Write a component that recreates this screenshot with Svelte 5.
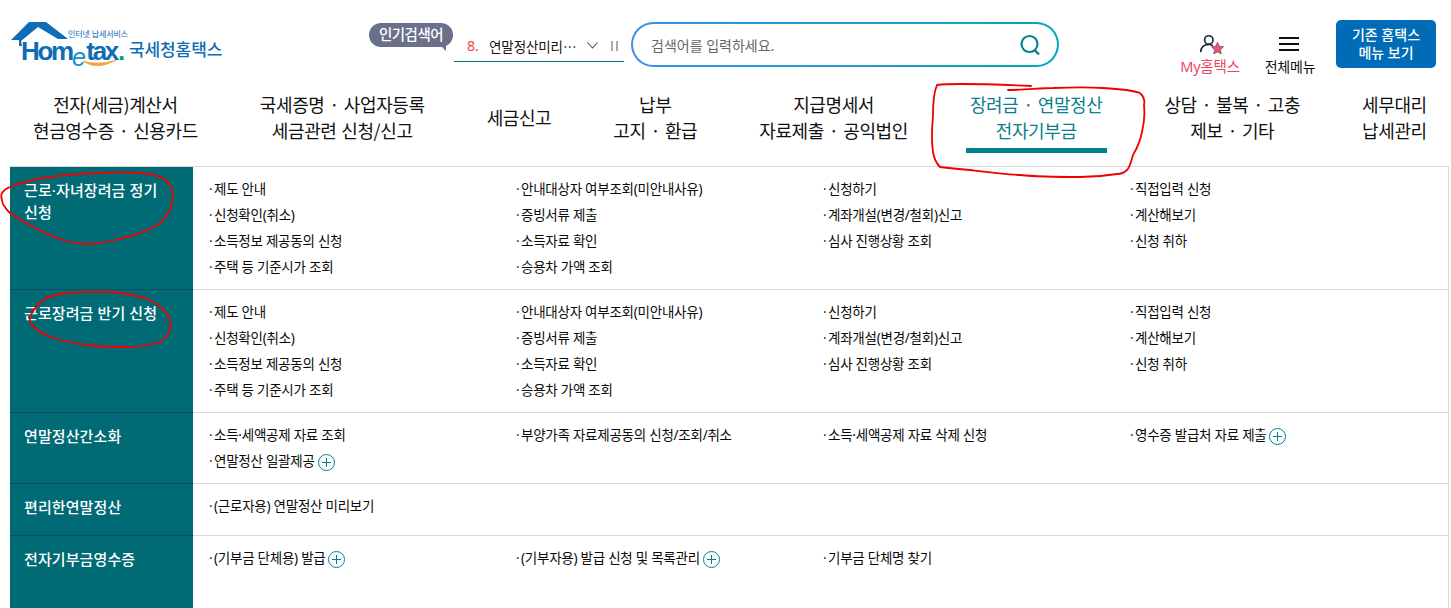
<script>
  const nav = [
    ['전자(세금)계산서', '현금영수증 · 신용카드'],
    ['국세증명 · 사업자등록', '세금관련 신청/신고'],
    ['세금신고'],
    ['납부', '고지 · 환급'],
    ['지급명세서', '자료제출 · 공익법인'],
    ['장려금 · 연말정산', '전자기부금'],
    ['상담 · 불복 · 고충', '제보 · 기타'],
    ['세무대리', '납세관리']
  ];
  const base = [
    ['제도 안내'], ['안내대상자 여부조회(미안내사유)'], ['신청하기'], ['직접입력 신청'],
    ['신청확인(취소)'], ['증빙서류 제출'], ['계좌개설(변경/철회)신고'], ['계산해보기'],
    ['소득정보 제공동의 신청'], ['소득자료 확인'], ['심사 진행상황 조회'], ['신청 취하'],
    ['주택 등 기준시가 조회'], ['승용차 가액 조회']
  ];
  const rows = [
    { title: '근로·자녀장려금 정기 신청', items: base, cls: 'r1' },
    { title: '근로장려금 반기 신청', items: base, cls: 'r1' },
    { title: '연말정산간소화', cls: 'r3', items: [
      ['소득·세액공제 자료 조회'], ['부양가족 자료제공동의 신청/조회/취소'], ['소득·세액공제 자료 삭제 신청'], ['영수증 발급처 자료 제출', true],
      ['연말정산 일괄제공', true]
    ]},
    { title: '편리한연말정산', cls: 'r4', items: [['(근로자용) 연말정산 미리보기']] },
    { title: '전자기부금영수증', cls: 'r5', items: [
      ['(기부금 단체용) 발급', true], ['(기부자용) 발급 신청 및 목록관리', true], ['기부금 단체명 찾기']
    ]}
  ];
</script>

<div class="page">
  <header class="top">
    <div class="logo">
      <svg class="house" viewBox="0 0 60 22" width="60" height="22" aria-hidden="true">
        <path d="M0 18 L18 0 H35 L57 17 H47 L27 5 L10 19 L11 24 H8 V18 Z" fill="#0f6cb5" />
      </svg>
      <span class="small-tag">인터넷 납세서비스</span>
      <span class="wordmark">Hom<span class="e">e</span>tax<span class="dot">.</span></span>
      <svg class="smile" viewBox="0 0 34 9" width="34" height="9" aria-hidden="true">
        <path d="M0 1 Q14 11 33 0 Q16 6 0 1 Z" fill="#f3a33a" stroke="#f3a33a" stroke-width="0.8"/>
      </svg>
      <span class="brand">국세청홈택스</span>
    </div>

    <div class="popular">
      <span class="bubble">인기검색어</span>
      <div class="rank">
        <b>8.</b><span class="rank-text">연말정산미리…</span>
        <svg viewBox="0 0 11 7" width="11" height="7" aria-hidden="true"><path d="M0.5 0.5 L5.5 6 L10.5 0.5" fill="none" stroke="#555" stroke-width="1.1"/></svg>
        <span class="pause"></span>
      </div>
    </div>

    <div class="search">
      <span class="ph">검색어를 입력하세요.</span>
      <svg viewBox="0 0 22 22" width="22" height="22" aria-hidden="true">
        <circle cx="10.5" cy="10" r="8" fill="none" stroke="#00838f" stroke-width="2.2"/>
        <path d="M15.5 16 L20 20.5" stroke="#00838f" stroke-width="2.4" fill="none"/>
      </svg>
    </div>

    <div class="my">
      <svg viewBox="0 0 28 22" width="26" height="20" aria-hidden="true">
        <circle cx="10.5" cy="6.5" r="4.6" fill="none" stroke="#1c2340" stroke-width="1.8"/>
        <path d="M1.5 20 C2 14 6 11.5 10.5 11.5 C12 11.5 13.5 12 15 12.8" fill="none" stroke="#1c2340" stroke-width="1.8"/>
        <path d="M20 9 L22.1 13.4 L26.8 14 L23.3 17.3 L24.2 22 L20 19.7 L15.8 22 L16.7 17.3 L13.2 14 L17.9 13.4 Z" fill="#f0536f" stroke="#1c2340" stroke-width="0.5"/>
      </svg>
      <span>My홈택스</span>
    </div>
    <div class="all">
      <span class="burger"><i></i><i></i><i></i></span>
      <span>전체메뉴</span>
    </div>
    <div class="old">기존 홈택스<br />메뉴 보기</div>
  </header>

  <nav class="nav">
    {#each nav as lines, i}
      <div class="nav-item" class:on={i === 5}>
        <div class="nav-label">
          {#each lines as l}<div>{l}</div>{/each}
        </div>
      </div>
    {/each}
  </nav>

  <section class="table">
    {#each rows as row}
      <div class="row {row.cls}">
        <h3>{row.title}</h3>
        <ul>
          {#each row.items as it}
            <li>
              <span class="mid">·</span><span>{it[0]}</span>{#if it[1]}<span class="plus"></span>{/if}
            </li>
          {/each}
        </ul>
      </div>
    {/each}
  </section>

  <svg class="marks" viewBox="0 0 1451 608" width="1451" height="608" aria-hidden="true">
    <path d="M1008 90 C1025 90 1040 88 1053 88 C1075 87 1090 87 1103 88 C1120 89 1132 90 1140 93 C1144 97 1145 101 1144 105 C1145 115 1144 124 1142 132 C1140 142 1136 150 1133 155 C1131 162 1130 167 1127 170 C1124 173 1121 174 1117 174 C1105 176 1092 177 1080 177 C1060 177 1040 177 1020 175 C1003 174 987 172 970 170 C958 169 948 168 940 167 C936 163 934 158 933 152 C931 140 932 127 933 115 C933 103 934 92 937 85 C945 84 950 84 960 84 C985 84 1010 85 1031 86" fill="none" stroke="#f00000" stroke-width="1.8" stroke-linecap="round"/>
    <path d="M2 193 C4 190 7 188 10 187 C23 182 36 179 50 177 C67 175 83 173 100 173 C117 172 134 172 150 174 C160 176 167 180 170 185 C173 191 173 197 172 203 C170 211 166 218 160 223 C149 231 136 235 123 238 C112 241 101 244 90 244 C78 244 67 242 57 238 C47 234 38 230 30 225 C23 221 16 218 10 213 C5 208 2 204 2 200 C1 197 1 195 2 193" fill="none" stroke="#f00000" stroke-width="1.8" stroke-linecap="round"/>
    <path d="M30 317 C33 310 38 304 43 300 C50 296 58 294 67 293 C81 292 96 291 110 292 C124 293 138 295 150 300 C158 304 164 309 168 315 C170 320 171 325 170 330 C168 335 165 339 160 342 C150 345 138 347 127 347 C113 347 100 347 87 345 C74 343 61 341 50 337 C43 334 37 330 32 325 C30 322 29 320 30 317" fill="none" stroke="#f00000" stroke-width="1.8" stroke-linecap="round"/>
  </svg>
</div>

<style>
  :global(body) { margin: 0; background: #fff; }
  .page {
    position: relative;
    width: 1451px;
    height: 608px;
    overflow: hidden;
    font-family: "Noto Sans", "Noto Sans CJK KR", sans-serif;
    color: #111;
  }
  .top {
    display: flex;
    height: 84px;
    box-sizing: border-box;
  }
  .logo {
    position: relative;
    width: 369px;
    flex: none;
  }
  .house { position: absolute; left: 11px; top: 22px; overflow: visible; }
  .small-tag {
    position: absolute; left: 68px; top: 29px;
    font-size: 8px; line-height: 10px; color: #0f6cb5; white-space: nowrap; letter-spacing: -0.1px;
  }
  .wordmark {
    position: absolute; left: 21px; top: 36px;
    height: 30px;
    font: 700 26px/30px "Liberation Sans", sans-serif;
    letter-spacing: -2.3px; color: #0f6cb5; white-space: nowrap;
  }
  .wordmark .e {
    position: relative; top: 6px; font-weight: 400; font-style: italic; font-size: 25px; color: #1690cc;
    letter-spacing: 0.5px; margin-left: 0;
  }
  .wordmark .dot { color: #19a24b; letter-spacing: 0; margin-left: 1px; }
  .smile { position: absolute; left: 83px; top: 60px; }
  .brand {
    position: absolute; left: 129px; top: 38px;
    font-size: 17px; line-height: 24px; font-weight: 500; letter-spacing: -0.1px; color: #0f6cb5;
  }
  .popular {
    position: relative;
    width: 262px;
    flex: none;
  }
  .bubble {
    display: block;
    position: absolute; left: 0; top: 23px;
    width: 84px; height: 24px;
    background: #6a6f8a;
    border-radius: 12px;
    color: #fff; font-size: 14.5px; line-height: 23px; text-align: center; font-weight: 500; letter-spacing: -0.5px;
  }
  .bubble::after {
    content: ""; position: absolute; right: 7px; bottom: -4px;
    border-style: solid; border-width: 0 6px 6px 0;
    border-color: transparent #6a6f8a transparent transparent;
  }
  .rank {
    position: absolute; left: 85px; top: 24px;
    width: 170px; height: 38px; box-sizing: border-box;
    border-bottom: 1px solid #00707d;
    display: flex; align-items: center; padding-left: 13px;
    font-size: 13.5px; letter-spacing: -0.1px; padding-top: 6px;
  }
  .rank b { color: #f0433f; font-weight: 400; width: 22px; flex: none; font-size: 14px; letter-spacing: 0; }
  .rank-text { width: 98px; flex: none; white-space: nowrap; font-family: "Noto Sans CJK KR", sans-serif; }
  .rank svg { flex: none; }
  .pause {
    width: 3px; height: 10px; margin-left: 13px; flex: none;
    border-left: 2px solid #aaa; border-right: 2px solid #aaa;
  }
  .search {
    width: 428px; height: 45px; margin-top: 22px;
    flex: none;
    box-sizing: border-box;
    border: 2px solid transparent;
    border-radius: 23px;
    background: linear-gradient(#fff, #fff) padding-box, linear-gradient(90deg, #3f8fe6, #00a9b5) border-box;
    display: flex; align-items: center; justify-content: space-between;
    padding: 0 16px 0 18px;
  }
  .ph { font-size: 14px; color: #666; letter-spacing: 0; }
  .my, .all {
    flex: none;
    display: flex; flex-direction: column; align-items: center;
    font-size: 14.5px; line-height: 18px; letter-spacing: -0.2px;
  }
  .my { width: 64px; margin-left: 119px; padding-top: 34px; color: #f0436a; }
  .my svg { margin-bottom: 3px; margin-left: 4px; }
  .all { width: 56px; margin-left: 20px; padding-top: 35px; color: #111; font-size: 14px; letter-spacing: -0.2px; }
  .burger { display: flex; flex-direction: column; gap: 4px; height: 18px; margin: 0 2px 3px 0; padding-top: 2px; }
  .burger i { display: block; width: 20px; height: 2px; background: #111; }
  .old {
    flex: none;
    width: 100px; height: 48px; margin: 20px 0 0 18px;
    border-radius: 5px; background: #006cb7; color: #fff;
    font-size: 14px; line-height: 18px; font-weight: 500; text-align: center;
    padding-top: 6px; box-sizing: border-box; letter-spacing: 0;
  }
  .nav {
    display: flex;
    height: 82px;
    padding-left: 2px;
    box-sizing: border-box;
    white-space: nowrap;
    font-family: "Noto Sans CJK KR", "Noto Sans", sans-serif;
  }
  .nav-item {
    padding: 7px 31px 0;
    text-align: center;
    flex: none;
    display: flex;
    font-size: 18px; line-height: 26px; letter-spacing: -0.4px; word-spacing: 1.2px;
  }
  .nav-label {
    position: relative;
    align-self: stretch;
    display: flex; flex-direction: column; justify-content: flex-start;
    height: 52px;
  }
  .nav-item:nth-child(3) .nav-label { justify-content: center; }
  .on { color: #0b7f8a; }
  .on .nav-label::after {
    content: ""; position: absolute; left: -4px; right: -5px; top: 57px; height: 5px; background: #00838f;
  }
  .table {
    margin-left: 10px;
    width: 1439px;
    box-sizing: border-box;
    border-top: 1px solid #d9d9d9;
    border-right: 1px solid #d9d9d9;
    border-bottom: 0;
  }
  .row { display: flex; }
  .r1 { height: 123px; }
  .r3 { height: 71px; }
  .r4 { height: 52px; }
  .r5 { height: 80px; }
  h3 {
    margin: 0; width: 183px; flex: none; box-sizing: border-box;
    background: #006a75;
    color: #fff;
    font-size: 15px; line-height: 22px; font-weight: 500;
    padding: 12px 22px 0 14px;
    letter-spacing: 0.1px;
    border-bottom: 1px solid #0a4f59;
  }
  .row:last-child h3 { border-bottom: 0; }
  ul {
    flex: 1;
    margin: 0;
    padding: 9px 0 0 16px;
    list-style: none;
    display: grid;
    grid-template-columns: repeat(4, 307px);
    grid-auto-rows: 26px;
    border-bottom: 1px solid #d9d9d9;
  }
  .row:last-child ul { border-bottom: 0; }
  li {
    font-size: 13.5px; line-height: 26px; letter-spacing: -0.25px; white-space: nowrap;
    display: flex; align-items: center; color: #0a0a0a;
  }
  .mid { width: 5px; flex: none; color: #333; letter-spacing: 0; }
  .plus {
    position: relative;
    width: 17px; height: 17px; margin-left: 3px; margin-top: 3px;
    border: 1px solid #00838f; border-radius: 50%; box-sizing: border-box; flex: none;
  }
  .plus::before { content: ""; position: absolute; left: 3px; right: 3px; top: 7px; height: 1px; background: #00838f; }
  .plus::after { content: ""; position: absolute; top: 3px; bottom: 3px; left: 7px; width: 1px; background: #00838f; }
  .marks { position: absolute; left: 0; top: 0; pointer-events: none; }
</style>
